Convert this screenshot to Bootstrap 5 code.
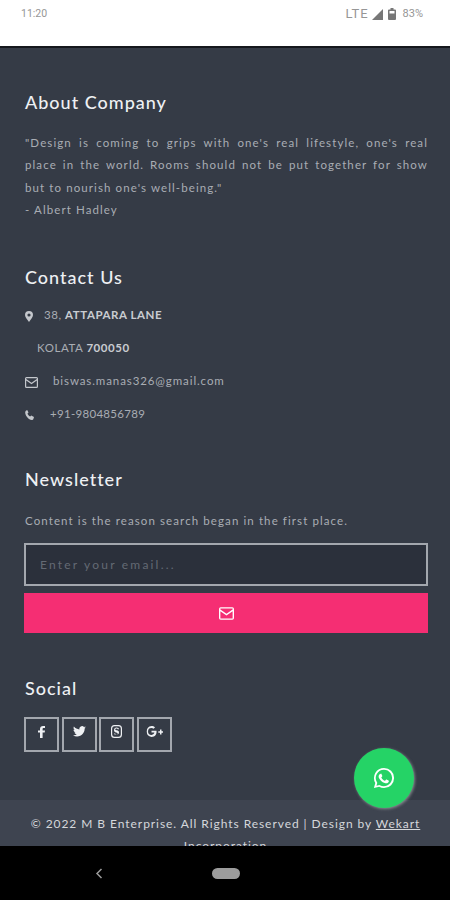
<!DOCTYPE html>
<html lang="en">
<head>
  <meta charset="UTF-8">
  <title>M B Enterprise</title>
  <meta name="viewport" content="width=device-width, initial-scale=1">
  <link href="https://cdn.jsdelivr.net/npm/bootstrap@5.3.2/dist/css/bootstrap.min.css" rel="stylesheet">
  <style>
    html, body { height: 100%; }
    body {
      background-color: #000;
      font-family: Lato, "Open Sans", sans-serif;
      overflow: hidden;
    }
    .phone { width: 450px; height: 900px; position: relative; overflow: hidden; }
    .status-strip {
      height: 48px;
      background: #fff;
      border-bottom: 2px solid #15181d;
      padding: 8px 27px 0 21px;
      color: #969696;
      font-family: Roboto, sans-serif;
      font-size: 10.5px;
      line-height: 12px;
    }
    .status-icons { gap: 5px; }
    .status-strip .lte { font-size: 13px; letter-spacing: .9px; margin-right: -3px; }
    .status-strip .pct { margin-left: 2px; font-size: 11px; }
    .page-area { height: 798px; background: #353b46; overflow: hidden; }
    .info-wrap { height: 752px; padding: 0 22px 0 24px; }
    .block-title {
      color: #eef0f3;
      font-size: 18px;
      font-weight: 500;
      letter-spacing: 1px;
      line-height: 22px;
      margin: 0 0 0 1px;
    }
    .title-about { margin-bottom: 19px; }
    .title-news { margin-bottom: 20px; }
    .title-social { margin-bottom: 18px; }
    .quote-text {
      color: #a9adb4;
      font-size: 11.5px;
      letter-spacing: 1.1px;
      line-height: 22.3px;
      text-align: justify;
      margin: 0 0 0 1px;
    }
    .news-note { margin-bottom: 11px; }
    .contact-list { margin: 19px 0 0 1px; }
    .contact-line {
      color: #a9adb4;
      font-size: 11.5px;
      letter-spacing: .55px;
      line-height: 16px;
      height: 33px;
    }
    .contact-line b { color: #c9ccd1; font-weight: 700; }
    .contact-line svg { fill: #c4c7cc; flex: none; }
    .addr-text { margin-left: 11px; }
    .addr-more { padding-left: 12px; }
    .mail-text { margin-left: 15px; letter-spacing: .9px; }
    .phone-text { margin-left: 16px; letter-spacing: .3px; }
    .mail-input {
      height: 43px;
      width: 100%;
      background: #2b303b;
      border: 2px solid #a3a7ae;
      border-radius: 0;
      color: #fff;
      font-size: 12px;
      letter-spacing: 2.2px;
      padding: 0 14px;
    }
    .mail-input::placeholder { color: #646a74; opacity: 1; }
    .mail-input:focus { background: #2b303b; border-color: #a3a7ae; box-shadow: none; color: #fff; }
    .send-btn {
      height: 40px;
      width: 100%;
      background: #f52e73;
      border: 0;
      border-radius: 0;
      margin-top: 7px;
      display: flex;
      align-items: center;
      justify-content: center;
    }
    .send-btn:hover, .send-btn:active { background: #f52e73 !important; }
    .social-row { gap: 2.5px; }
    .social-box {
      width: 35px;
      height: 35px;
      border: 2px solid #a3a7ae;
      display: flex;
      align-items: center;
      justify-content: center;
      padding-bottom: 6px;
    }
    .social-box svg { fill: #eef0f3; }
    .copy-bar {
      height: 46px;
      background: #3e4450;
      color: #d5d7db;
      font-size: 12px;
      letter-spacing: .94px;
      line-height: 22px;
      text-align: center;
      padding: 13px 20px 0 21px;
      overflow: hidden;
    }
    .copy-bar a { color: #d5d7db; }
    .nav-strip { height: 54px; background: #000; padding-left: 95px; }
    .nav-strip svg { flex: none; }
    .home-pill { width: 28px; height: 11px; border-radius: 6px; background: #9c9c9c; margin-left: 109px; }
    .wa-fab {
      position: absolute;
      left: 354px;
      top: 748px;
      width: 60px;
      height: 60px;
      border-radius: 50%;
      background: #25d366;
      box-shadow: 1px 1px 3px rgba(200, 200, 200, .55);
    }
    .sec-about { padding-top: 43px; }
    .sec-contact { padding-top: 45px; }
    .sec-news { padding-top: 29px; }
    .sec-social { padding-top: 44px; }
  </style>
</head>
<body>
  <div class="phone">
    <div class="status-strip d-flex justify-content-between align-items-start">
      <span>11:20</span>
      <span class="status-icons d-flex align-items-center">
        <span class="lte">LTE</span>
        <svg width="12" height="12" viewBox="0 0 12 12"><path fill="#777" d="M12 1v11H1z"/></svg>
        <svg width="8" height="12" viewBox="0 0 8 12"><path fill="#777" d="M2.5 0h3v1.5H7a1 1 0 0 1 1 1V11a1 1 0 0 1-1 1H1a1 1 0 0 1-1-1V2.500a1 1 0 0 1 1-1h1.500z"/><path fill="#fff" d="M1.500 3h5v2.500h-5z"/></svg>
        <span class="pct">83%</span>
      </span>
    </div>

    <div class="page-area">
      <div class="info-wrap">
        <section class="sec-about">
          <h5 class="block-title title-about">About Company</h5>
          <p class="quote-text">"Design is coming to grips with one's real lifestyle, one's real place in the world. Rooms should not be put together for show but to nourish one's well-being."<br>- Albert Hadley</p>
        </section>

        <section class="sec-contact">
          <h5 class="block-title">Contact Us</h5>
          <div class="contact-list">
            <div class="contact-line d-flex align-items-start">
              <svg class="mt-1" width="8" height="11" viewBox="0 0 8 11"><path fill-rule="evenodd" d="M4 0a4 4 0 0 1 4 4c0 2-2.500 5-4 7C2.500 9 0 6 0 4a4 4 0 0 1 4-4zm0 2.400a1.600 1.600 0 1 0 0 3.200 1.600 1.600 0 0 0 0-3.200z"/></svg>
              <span class="addr-text">38, <b>ATTAPARA LANE</b></span>
            </div>
            <div class="contact-line addr-more">KOLATA <b>700050</b></div>
            <div class="contact-line d-flex align-items-start">
              <svg class="mt-1" width="13" height="11" viewBox="0 0 13 11"><path fill-rule="evenodd" d="M1.500 0h10A1.500 1.500 0 0 1 13 1.500v8a1.500 1.500 0 0 1-1.500 1.500h-10A1.500 1.500 0 0 1 0 9.500v-8A1.500 1.500 0 0 1 1.500 0zM1.200 1.200v.9l5.300 3.700 5.300-3.700v-.9zm0 2.300v6.300h10.600V3.500L6.500 7.200z"/></svg>
              <span class="mail-text">biswas.manas326@gmail.com</span>
            </div>
            <div class="contact-line d-flex align-items-start">
              <svg class="mt-1" width="9" height="10" viewBox="0 0 9 10"><path d="M2.200 0l1.300 2.500-1 1c.5 1.300 1.300 2.200 2.700 3l1-1L9 7l-.7 2.200c-.3.600-.8.800-1.500.7C3.500 9.300.8 6.300.2 2.900.1 2.200.3 1.600.9.800z"/></svg>
              <span class="phone-text">+91-9804856789</span>
            </div>
          </div>
        </section>

        <section class="sec-news">
          <h5 class="block-title title-news">Newsletter</h5>
          <p class="quote-text news-note">Content is the reason search began in the first place.</p>
          <form onsubmit="return false">
            <input class="form-control mail-input" type="email" placeholder="Enter your email...">
            <button class="btn send-btn" type="submit" aria-label="Subscribe">
              <svg width="15" height="13" viewBox="0 0 13 11"><path fill="#fff" fill-rule="evenodd" d="M1.500 0h10A1.500 1.500 0 0 1 13 1.500v8a1.500 1.500 0 0 1-1.500 1.500h-10A1.500 1.500 0 0 1 0 9.500v-8A1.500 1.500 0 0 1 1.500 0zM1.200 1.200v.9l5.300 3.700 5.300-3.700v-.9zm0 2.300v6.300h10.600V3.500L6.500 7.200z"/></svg>
            </button>
          </form>
        </section>

        <section class="sec-social">
          <h5 class="block-title title-social">Social</h5>
          <div class="social-row d-flex">
            <a class="social-box" href="#" aria-label="Facebook"><svg width="7" height="12" viewBox="0 0 7 12"><path d="M2 12V6.600H0V4.500h2V3C2 1 3.200 0 5 0h2v2H5.700c-.9 0-1.100.4-1.100 1.100v1.400H7l-.3 2.100H4.600V12z"/></svg></a>
            <a class="social-box" href="#" aria-label="Twitter"><svg width="13" height="11" viewBox="0 0 24 20"><path d="M24 2.400c-.9.400-1.800.7-2.800.8 1-.6 1.800-1.600 2.200-2.700-1 .6-2 1-3.100 1.200A4.900 4.900 0 0 0 11.900 6.200C7.800 6 4.200 4 1.700.9c-1.300 2.200-.7 5 1.500 6.500-.8 0-1.600-.2-2.200-.6 0 2.300 1.600 4.300 3.900 4.800-.7.200-1.500.2-2.200.1.600 2 2.400 3.400 4.600 3.400A9.900 9.900 0 0 1 0 16.700 14 14 0 0 0 7.500 19c9.100 0 14.300-7.700 14-14.600 1-.7 1.800-1.500 2.500-2z"/></svg></a>
            <a class="social-box" href="#" aria-label="Skype"><svg width="11" height="13" viewBox="0 0 11 13"><path fill-rule="evenodd" d="M3.500 0h4A3.500 3.500 0 0 1 11 3.500v6A3.500 3.500 0 0 1 7.500 13h-4A3.500 3.500 0 0 1 0 9.500v-6A3.500 3.500 0 0 1 3.500 0zm0 1.200A2.300 2.300 0 0 0 1.200 3.500v6a2.300 2.300 0 0 0 2.300 2.300h4a2.300 2.300 0 0 0 2.300-2.300v-6a2.300 2.300 0 0 0-2.300-2.300zM5.500 2.500c1.500 0 2.500.7 2.500 1.800H6.700c0-.4-.5-.7-1.200-.7s-1.200.3-1.200.8.500.7 1.400.9c1.500.3 2.300.9 2.300 2.100 0 1.300-1 2.100-2.500 2.100S3 9.700 3 8.500h1.300c0 .5.500.9 1.200.9s1.200-.4 1.200-.9-.5-.8-1.500-1C3.800 7.200 3 6.500 3 5.300 3 3.400 4 2.500 5.500 2.500z"/></svg></a>
            <a class="social-box" href="#" aria-label="Google Plus"><svg width="17" height="11" viewBox="0 0 17 11"><path d="M5.500 0c1.400 0 2.600.5 3.500 1.400L7.500 2.800c-.5-.5-1.200-.8-2-.8a3.400 3.400 0 0 0 0 6.900c1.800 0 2.700-1.100 2.900-2.300H5.500V4.700h5c.5 3.700-1.500 6.200-5 6.200a5.500 5.500 0 0 1 0-10.900zM14 3.500h1.500v1.800H17v1.500h-1.500v1.700H14V6.800h-1.700V5.300H14z"/></svg></a>
          </div>
        </section>
      </div>
      <div class="copy-bar">© 2022 M B Enterprise. All Rights Reserved | Design by <a href="#">Wekart Incorporation</a></div>
    </div>

    <div class="nav-strip d-flex align-items-center">
      <svg width="8" height="11" viewBox="0 0 8 11"><path fill="none" stroke="#9c9c9c" stroke-width="1.500" d="M6.500 1 2 5.500 6.500 10"/></svg>
      <span class="home-pill"></span>
    </div>

    <a class="wa-fab d-flex align-items-center justify-content-center" href="#" aria-label="WhatsApp">
      <svg width="22" height="22" viewBox="0 0 24 24"><path fill="#fff" fill-rule="evenodd" d="M12 1a11 11 0 0 1 0 22c-1.900 0-3.700-.5-5.300-1.400L1 23l1.500-5.500A11 11 0 0 1 12 1zm0 2a9 9 0 0 0-7.600 13.800l.3.500-.9 3.100 3.200-.8.500.3A9 9 0 1 0 12 3zM8.400 7c.3 0 .5 0 .7.400l1 2.200c.1.300 0 .5-.1.700l-.8 1c-.1.200-.1.300 0 .5.800 1.500 1.900 2.500 3.500 3.200.2.100.4.100.5-.1l.9-1c.2-.3.400-.3.700-.2l2.100 1c.3.200.4.300.4.500 0 .9-.3 1.600-1 2.100-1 .7-2.200.7-3.600.2-2.900-1-5-3-6.200-5.500-.6-1.300-.5-2.700.4-3.700.4-.5.900-.7 1.500-.6z"/></svg>
    </a>
  </div>
  <script src="https://cdn.jsdelivr.net/npm/bootstrap@5.3.2/dist/js/bootstrap.bundle.min.js"></script>
</body>
</html>
